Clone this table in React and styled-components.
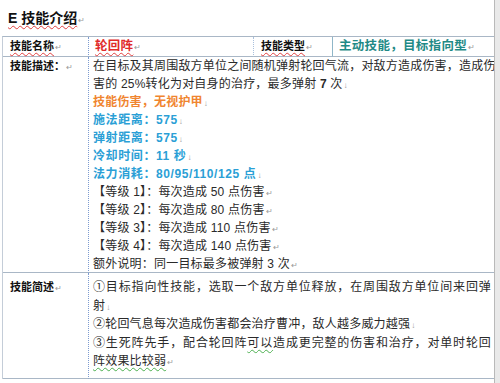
import React from "react";
import styled, { createGlobalStyle } from "styled-components";

const Global = createGlobalStyle`
  html, body { margin: 0; padding: 0; background: #e9e9e9; }
  body { font-family: "Liberation Sans", "Noto Sans CJK SC", sans-serif; color: #222; }
`;

const Page = styled.div`
  width: 495px;
  height: 383px;
  background: #fff;
  border-right: 1px solid #b9b9b9;
  box-sizing: border-box;
  overflow: hidden;
`;

const Title = styled.h1`
  margin: 0;
  height: 36px;
  box-sizing: border-box;
  padding: 9px 0 0 8px;
  font-size: 14px;
  line-height: 18px;
  font-weight: 700;
  color: #111;
`;

const Wavy = styled.span`
  text-decoration: underline wavy ${(p) => p.$c || "#e04040"};
  text-decoration-thickness: 1px;
  text-underline-offset: 2px;
`;

const Mark = styled.span`
  font-size: 8px;
  line-height: 0;
  color: #999;
  font-weight: 400;
  margin-left: 1px;
`;

const Table = styled.div`
  display: grid;
  grid-template-columns: 86px 165px 79px 165px;
  border-top: 1px solid #a9b7c6;
  margin-left: 2px;
  border-left: 1px solid #c4cdd8;
  margin-right: -2px;
`;

const Cell = styled.div`
  box-sizing: border-box;
  border-bottom: 1px solid #a9b7c6;
  border-right: 1px ${(p) => p.$edge || "dotted"} ${(p) => p.$line || "#7d9bd0"};
  grid-column: ${(p) => p.$span || "auto"};
  height: ${(p) => p.$h}px;
  padding: ${(p) => p.$pad || "0 4px"};
`;

const Label = styled.div`
  font-size: 11px;
  font-weight: 700;
  height: ${(p) => p.$lh || 19}px;
  line-height: ${(p) => p.$lh || 19}px;
  color: #111;
  padding-left: 3px;
`;

const Colored = styled.div`
  font-size: 12.5px;
  font-weight: 700;
  height: 19px;
  line-height: 19px;
  color: ${(p) => p.$c};
  letter-spacing: 0.3px;
  padding-left: ${(p) => p.$pl || 2}px;
`;

const Line = styled.div`
  font-size: 12px;
  height: ${(p) => p.$lh || 18}px;
  line-height: ${(p) => p.$lh || 18}px;
  color: ${(p) => p.$c || "#2a2a2a"};
  font-weight: ${(p) => (p.$b ? 700 : 400)};
  white-space: nowrap;
  text-align: ${(p) => (p.$full ? "justify" : "left")};
  text-align-last: ${(p) => (p.$full ? "justify" : "left")};
  letter-spacing: ${(p) => p.$ls || "0.2px"};
`;

const Num = styled.span`
  font-weight: 700;
`;

export default function App() {
  return (
    <>
      <Global />
      <Page>
        <Title>
          <Wavy>E 技能介绍</Wavy>
          <Mark>↵</Mark>
        </Title>
        <Table>
          <Cell $h={20}>
            <Label>
              <Wavy>技能名称</Wavy>
              <Mark>↵</Mark>
            </Label>
          </Cell>
          <Cell $h={20} $line="#a9c0dd">
            <Colored $c="#e02a2a" $pl={2}>
              <Wavy>轮回阵</Wavy>
              <Mark>↵</Mark>
            </Colored>
          </Cell>
          <Cell $h={20} $edge="solid" $line="#8fb6c8">
            <Label>
              <Wavy>技能类型</Wavy>
              <Mark>↵</Mark>
            </Label>
          </Cell>
          <Cell $h={20} $edge="solid" $line="#b3b3b3">
            <Colored $c="#1f8a86">
              主动技能，目标指向型<Mark>↵</Mark>
            </Colored>
          </Cell>

          <Cell $h={216}>
            <Label $lh={18}>
              技能描述：<Mark>↵</Mark>
            </Label>
          </Cell>
          <Cell $h={216} $span="2 / 5" $edge="solid" $line="#b3b3b3">
            <Line $full>在目标及其周围敌方单位之间随机弹射轮回气流，对敌方造成伤害，造成伤</Line>
            <Line>
              害的 25%转化为对自身的治疗，最多弹射 <Num>7</Num> 次<Mark>↓</Mark>
            </Line>
            <Line $c="#f0852f" $b>
              技能伤害，无视护甲<Mark>↓</Mark>
            </Line>
            <Line $c="#2b9fd6" $b $ls="0.6px">
              施法距离：575<Mark>↓</Mark>
            </Line>
            <Line $c="#2b9fd6" $b $ls="0.6px">
              弹射距离：575<Mark>↓</Mark>
            </Line>
            <Line $c="#2b9fd6" $b $ls="0.6px">
              冷却时间：11 秒<Mark>↓</Mark>
            </Line>
            <Line $c="#2b9fd6" $b $ls="0.6px">
              法力消耗：80/95/110/125 点<Mark>↓</Mark>
            </Line>
            <Line>【等级 1】：每次造成 50 点伤害<Mark>↵</Mark></Line>
            <Line>【等级 2】：每次造成 80 点伤害<Mark>↵</Mark></Line>
            <Line>【等级 3】：每次造成 110 点伤害<Mark>↵</Mark></Line>
            <Line>【等级 4】：每次造成 140 点伤害<Mark>↵</Mark></Line>
            <Line>额外说明：同一目标最多被弹射 3 次<Mark>↵</Mark></Line>
          </Cell>

          <Cell $h={106} $pad="5px 4px 0">
            <Label $lh={18.5}>
              技能简述<Mark>↵</Mark>
            </Label>
          </Cell>
          <Cell $h={106} $span="2 / 5" $edge="solid" $line="#b3b3b3" $pad="5px 6px 0 4px">
            <Line $full $lh={18.5}>①目标指向性技能，选取一个敌方单位释放，在周围敌方单位间来回弹</Line>
            <Line $lh={18.5}>射<Mark>↓</Mark></Line>
            <Line $lh={18.5}>②轮回气息每次造成伤害都会治疗曹冲，敌人越多威力越强<Mark>↓</Mark></Line>
            <Line $full $lh={18.5}>
              ③生死阵先手，配合轮回阵<Wavy $c="#4caf50">可以</Wavy>造成更完整的伤害和治疗，对单时轮回
            </Line>
            <Line $lh={18.5}>
              <Wavy $c="#4caf50">阵效果比较弱</Wavy>
              <Mark>↵</Mark>
            </Line>
          </Cell>
        </Table>
      </Page>
    </>
  );
}
